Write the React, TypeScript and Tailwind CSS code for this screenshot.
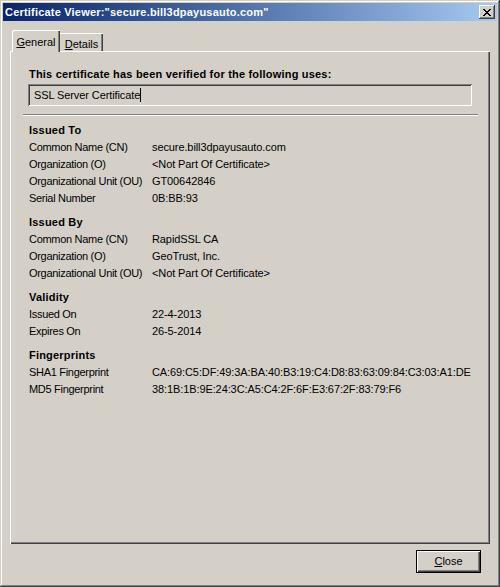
import { ReactNode } from "react";

type Row = [string, string]

const sections: { title: string; rows: Row[] }[] = [
  {
    title: "Issued To",
    rows: [
      ["Common Name (CN)", "secure.bill3dpayusauto.com"],
      ["Organization (O)", "<Not Part Of Certificate>"],
      ["Organizational Unit (OU)", "GT00642846"],
      ["Serial Number", "0B:BB:93"],
    ],
  },
  {
    title: "Issued By",
    rows: [
      ["Common Name (CN)", "RapidSSL CA"],
      ["Organization (O)", "GeoTrust, Inc."],
      ["Organizational Unit (OU)", "<Not Part Of Certificate>"],
    ],
  },
  {
    title: "Validity",
    rows: [
      ["Issued On", "22-4-2013"],
      ["Expires On", "26-5-2014"],
    ],
  },
  {
    title: "Fingerprints",
    rows: [
      ["SHA1 Fingerprint", "CA:69:C5:DF:49:3A:BA:40:B3:19:C4:D8:83:63:09:84:C3:03:A1:DE"],
      ["MD5 Fingerprint", "38:1B:1B:9E:24:3C:A5:C4:2F:6F:E3:67:2F:83:79:F6"],
    ],
  },
]

function Section({ title, rows }: { title: string; rows: Row[] }) {
  return (
    <div className="mt-[7px] first:mt-0">
      <div className="h-[17px] leading-[17px] font-bold tracking-[0.2px]">{title}</div>
      {rows.map(([label, value]) => (
        <div key={label} className="flex h-[17px] leading-[17px]">
          <div className="w-[123px] shrink-0 tracking-[-0.3px]">{label}</div>
          <div className="whitespace-nowrap tracking-[-0.1px]">{value}</div>
        </div>
      ))}
    </div>
  )
}

function Mnemonic({ first, rest }: { first: string; rest: string }): ReactNode {
  return (
    <>
      <span className="underline underline-offset-1">{first}</span>
      {rest}
    </>
  )
}

export default function App() {
  return (
    <div className="w-[500px] h-[587px] bg-[#d4d0c8] p-[3px] flex flex-col text-[11px] text-black font-['Liberation_Sans',Arial,sans-serif] shadow-[inset_-1px_-1px_#404040,inset_1px_1px_#d4d0c8,inset_-2px_-2px_#808080,inset_2px_2px_#ffffff]">
      {/* title bar */}
      <div className="h-[18px] flex items-center justify-between pl-[2px] pr-[2px] bg-gradient-to-r from-[#0a246a] to-[#a6caf0]">
        <span className="text-white font-bold text-[11px] leading-none tracking-[0.2px]">
          Certificate Viewer:"secure.bill3dpayusauto.com"
        </span>
        <div className="w-[16px] h-[14px] bg-[#d4d0c8] flex items-center justify-center shadow-[inset_-1px_-1px_#404040,inset_1px_1px_#ffffff,inset_-2px_-2px_#808080]">
          <svg width="8" height="7" viewBox="0 0 8 7">
            <path d="M0 0h2v1h1v1h2V1h1V0h2v1H7v1H6v1H5v1h1v1h1v1h1v1H6V6H5V5H3v1H2v1H0V6h1V5h1V4h1V3H2V2H1V1H0z" fill="#000" />
          </svg>
        </div>
      </div>

      {/* tabs */}
      <div className="flex items-end pl-[9px] mt-[8px] h-[22px] relative z-10">
        <div className="h-[22px] w-[48px] bg-[#d4d0c8] rounded-tl-[2px] flex items-start justify-center pt-[4px] shadow-[inset_1px_1px_#ffffff,inset_-1px_0_#404040,inset_-2px_0_#808080] -mb-[1px]">
          <Mnemonic first="G" rest="eneral" />
        </div>
        <div className="h-[18px] w-[43px] bg-[#d4d0c8] flex items-start justify-center pt-[3px] shadow-[inset_0_1px_#ffffff,inset_-1px_0_#404040,inset_-2px_0_#808080]">
          <Mnemonic first="D" rest="etails" />
        </div>
      </div>

      {/* panel */}
      <div className="mx-[7px] h-[493px] flex flex-col pt-[15px] pl-[13px] pr-[12px] shadow-[inset_1px_1px_#ffffff,inset_-1px_-1px_#404040,inset_-2px_-2px_#808080]">
        <div className="px-[6px]">
          <div className="h-[17px] leading-[17px] font-bold tracking-[0.2px]">
            This certificate has been verified for the following uses:
          </div>
          <div className="mt-[1px] -ml-[1px] h-[22px] flex items-center pl-[6px] shadow-[inset_1px_1px_#808080,inset_-1px_-1px_#ffffff,inset_2px_2px_#404040,inset_-2px_-2px_#d4d0c8]">
            <span className="tracking-[-0.1px]">SSL Server Certificate</span>
            <span className="w-[1px] h-[14px] bg-black" />
          </div>
        </div>
        <div className="mt-[8px] h-[2px] border-t border-t-[#808080] border-b border-b-white" />
        <div className="px-[6px] mt-[6px]">
          {sections.map((s) => (
            <Section key={s.title} title={s.title} rows={s.rows} />
          ))}
        </div>
      </div>

      {/* bottom buttons */}
      <div className="flex justify-end pr-[16px] mt-[6px]">
        <button className="w-[65px] h-[23px] bg-[#d4d0c8] flex items-center justify-center shadow-[inset_1px_1px_#000,inset_-1px_-1px_#000,inset_2px_2px_#ffffff,inset_-2px_-2px_#404040,inset_-3px_-3px_#808080]">
          <Mnemonic first="C" rest="lose" />
        </button>
      </div>
    </div>
  )
}
